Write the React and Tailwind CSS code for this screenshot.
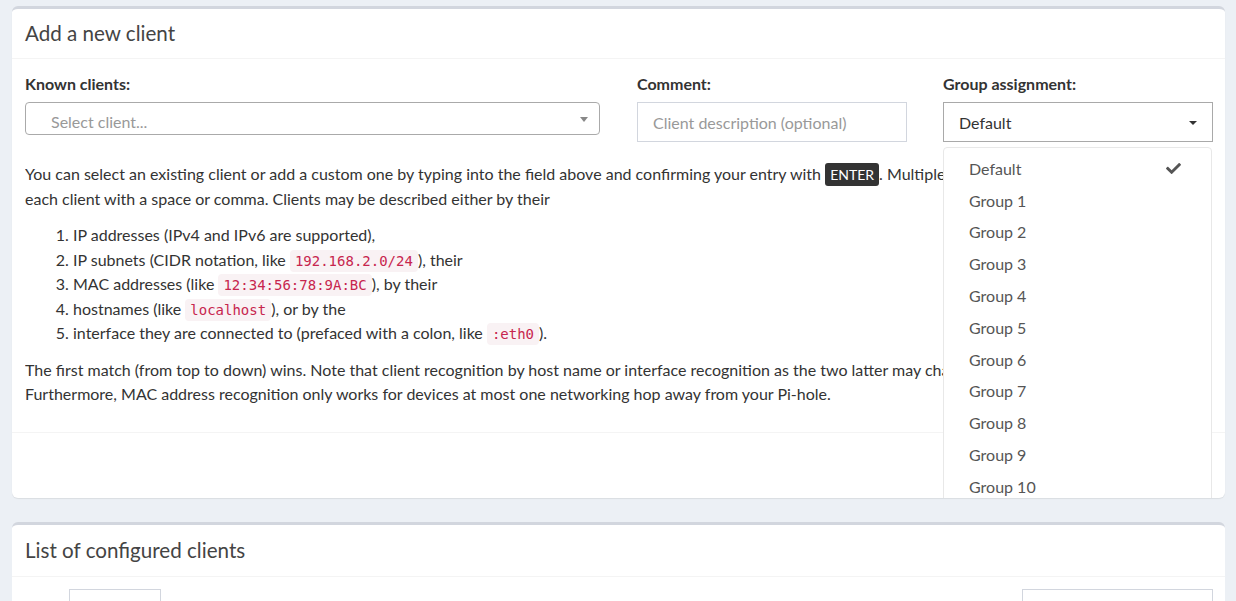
import { FaCheck } from "react-icons/fa";

const font = { fontFamily: "Lato, 'Noto Sans', sans-serif" };
const mono = "font-['DejaVu_Sans_Mono',monospace]";

function Code({ children }) {
  return (
    <code
      className={`${mono} text-[14px] leading-none text-[#c7254e] bg-[#f9f2f4] rounded-[4px] px-[5px] py-[3px]`}
    >
      {children}
    </code>
  );
}

const groups = ["Default", ...Array.from({ length: 12 }, (_, i) => `Group ${i + 1}`)];

export default function App() {
  return (
    <div
      className="h-[601px] overflow-hidden bg-[#ecf0f5] pt-[6px] pl-[12px] pr-[11px] text-[16px] text-[#333]"
      style={font}
    >
      {/* Card 1 */}
      <div className="bg-white rounded-[6px] border-t-[3px] border-[#d2d6de] overflow-hidden shadow-[0_1px_1px_rgba(0,0,0,0.08)]">
        <div className="h-[50px] border-b border-[#f4f4f4] px-[13px] pt-[12px]">
          <h3 className="text-[20.6px] text-[#444] leading-[24px]">Add a new client</h3>
        </div>
        <div className="pl-[13px] pr-[12px] pt-[15px] pb-[25px]">
          <div className="flex">
            <div className="w-[575px] shrink-0">
              <label className="block font-bold leading-[20px] mb-[8px]">Known clients:</label>
              <div className="relative h-[33px] border border-[#aaa] rounded-[4px] flex items-center pt-[6px] pl-[25px] text-[#999]">
                Select client...
                <span className="absolute right-[11px] top-[14px] w-0 h-0 border-t-[5px] border-t-[#888] border-x-[4px] border-x-transparent" />
              </div>
            </div>
            <div className="w-[270px] ml-[37px] shrink-0">
              <label className="block font-bold leading-[20px] mb-[8px]">Comment:</label>
              <div className="h-[40px] border border-[#d2d6de] flex items-center pt-[2px] pl-[15px] text-[#999]">
                Client description (optional)
              </div>
            </div>
            <div className="w-[270px] ml-[36px] shrink-0">
              <label className="block font-bold leading-[20px] mb-[8px]">Group assignment:</label>
              <div className="relative">
                <div className="h-[40px] border border-[#a9a9a9] flex items-center pt-[2px] pl-[15px] text-[#333]">
                  Default
                  <span className="absolute right-[16px] top-[19px] w-0 h-0 border-t-[4px] border-t-[#333] border-x-[4px] border-x-transparent" />
                </div>
                <div className="absolute z-10 left-0 right-[1px] top-[45px] bg-white border border-[#e8e8e8] rounded-[4px] pt-[5px] text-[#555]">
                  {groups.map((g, i) => (
                    <div key={g} className="relative h-[31.8px] flex items-center pl-[25px]">
                      {g}
                      {i === 0 && (
                        <FaCheck className="absolute right-[29px] top-[8px] text-[#555] w-[17px] h-[15px]" />
                      )}
                    </div>
                  ))}
                </div>
              </div>
            </div>
          </div>

          <div className="mt-[19px] whitespace-nowrap overflow-hidden">
            <div className="h-[25px] leading-[25px]">
              You can select an existing client or add a custom one by typing into the field above and confirming your entry with{" "}
              <kbd className="bg-[#333] text-white rounded-[3px] px-[5px] py-[3px] text-[14px] leading-none font-['Lato',sans-serif]">
                ENTER
              </kbd>
              . Multiple clients may be added by separating
            </div>
            <div className="h-[25px] leading-[25px]">
              each client with a space or comma. Clients may be described either by their
            </div>
          </div>
          <ol className="list-decimal pl-[48px] mt-[12px]">
            <li className="h-[24.5px] leading-[24.5px]">IP addresses (IPv4 and IPv6 are supported),</li>
            <li className="h-[24.5px] leading-[24.5px]">
              IP subnets (CIDR notation, like <Code>192.168.2.0/24</Code>), their
            </li>
            <li className="h-[24.5px] leading-[24.5px]">
              MAC addresses (like <Code>12:34:56:78:9A:BC</Code>), by their
            </li>
            <li className="h-[24.5px] leading-[24.5px]">
              hostnames (like <Code>localhost</Code>), or by the
            </li>
            <li className="h-[24.5px] leading-[24.5px]">
              interface they are connected to (prefaced with a colon, like <Code>:eth0</Code>).
            </li>
          </ol>
          <div className="mt-[12px] whitespace-nowrap overflow-hidden">
            <div className="h-[24.5px] leading-[24.5px]">
              The first match (from top to down) wins. Note that client recognition by host name or interface recognition as the two latter may change.
            </div>
            <div className="h-[24.5px] leading-[24.5px]">
              Furthermore, MAC address recognition only works for devices at most one networking hop away from your Pi-hole.
            </div>
          </div>
        </div>
        <div className="h-[66px] border-t border-[#f4f4f4]" />
      </div>

      {/* Card 2 */}
      <div className="mt-[24px] bg-white rounded-[6px] border-t-[3px] border-[#d2d6de] overflow-hidden">
        <div className="h-[52px] border-b border-[#f4f4f4] px-[13px] pt-[13px]">
          <h3 className="text-[20.6px] text-[#444] leading-[24px]">List of configured clients</h3>
        </div>
        <div className="pl-[13px] pr-[12px] pt-[12px] pb-[20px] flex items-start justify-between">
          <div className="flex items-start gap-[5px]">
            <span className="pt-[12px]">Show</span>
            <div className="w-[92px] h-[34px] border border-[#d2d6de]" />
            <span className="pt-[12px]">entries</span>
          </div>
          <div className="flex items-start gap-[8px]">
            <span className="pt-[12px]">Search:</span>
            <div className="w-[191px] h-[34px] border border-[#d2d6de]" />
          </div>
        </div>
      </div>
    </div>
  );
}
